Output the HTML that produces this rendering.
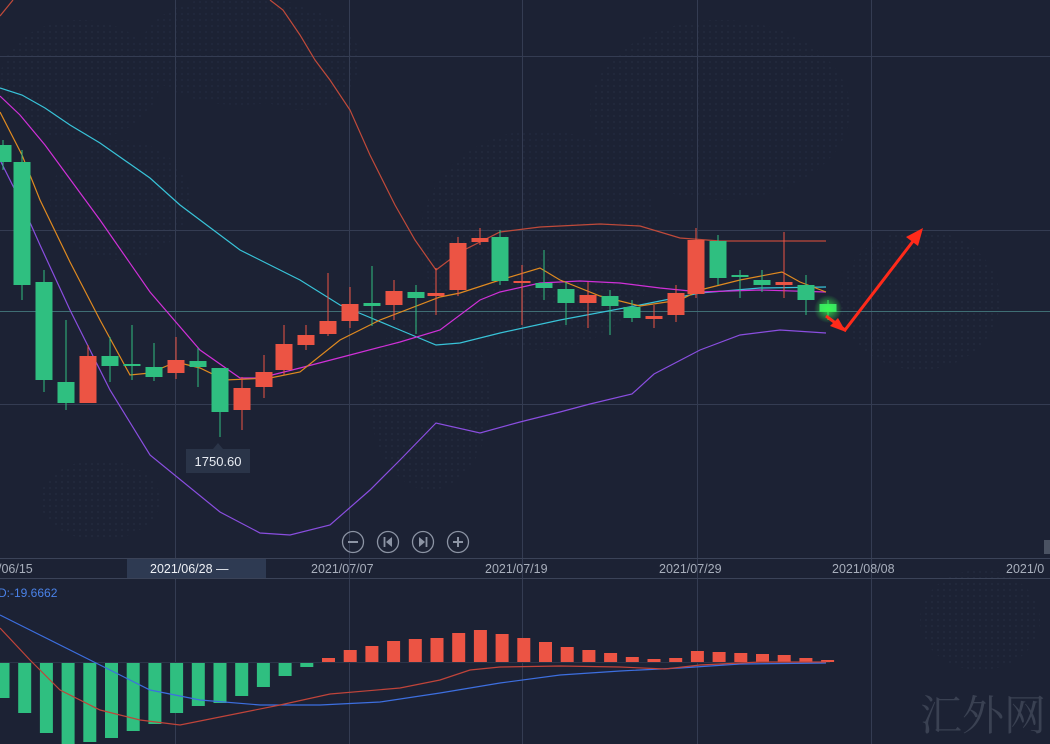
<!DOCTYPE html>
<html><head><meta charset="utf-8"><style>
html,body{margin:0;padding:0;background:#1c2234;}
body{width:1050px;height:744px;overflow:hidden;position:relative;font-family:"Liberation Sans",sans-serif;}
svg{position:absolute;left:0;top:0;}
</style></head><body>
<svg width="1050" height="744" viewBox="0 0 1050 744">
<defs>
<pattern id="dots" width="6" height="6" patternUnits="userSpaceOnUse"><rect x="1" y="1" width="2" height="2" fill="#232a3e"/></pattern>
<radialGradient id="glow"><stop offset="0" stop-color="#3cff50" stop-opacity="0.8"/><stop offset="1" stop-color="#3cff50" stop-opacity="0"/></radialGradient>
</defs>
<rect width="1050" height="744" fill="#1c2234"/>
<g fill="url(#dots)" opacity="0.7">
<ellipse cx="80" cy="80" rx="80" ry="60"/><ellipse cx="240" cy="50" rx="100" ry="55"/>
<ellipse cx="120" cy="200" rx="70" ry="60"/><ellipse cx="300" cy="60" rx="60" ry="50"/>
<ellipse cx="430" cy="400" rx="60" ry="90"/><ellipse cx="540" cy="240" rx="120" ry="110"/>
<ellipse cx="720" cy="110" rx="130" ry="90"/><ellipse cx="920" cy="300" rx="80" ry="70"/>
<ellipse cx="980" cy="620" rx="60" ry="50"/><ellipse cx="100" cy="500" rx="60" ry="40"/>
</g>
<g stroke="#343c52" stroke-width="1">
<line x1="0" y1="56.5" x2="1050" y2="56.5"/><line x1="0" y1="230.5" x2="1050" y2="230.5"/>
<line x1="0" y1="404.5" x2="1050" y2="404.5"/>
<line x1="175.5" y1="0" x2="175.5" y2="744"/><line x1="349.5" y1="0" x2="349.5" y2="744"/>
<line x1="522.5" y1="0" x2="522.5" y2="744"/><line x1="697.5" y1="0" x2="697.5" y2="744"/>
<line x1="871.5" y1="0" x2="871.5" y2="744"/>
</g>
<line x1="0" y1="311.5" x2="1050" y2="311.5" stroke="#3f6e74" stroke-width="1"/>
<line x1="0" y1="558.5" x2="1050" y2="558.5" stroke="#3b4358"/>
<line x1="0" y1="578.5" x2="1050" y2="578.5" stroke="#3b4358"/>
<polyline fill="none" stroke="#c04a3a" stroke-width="1.2" points="0,16 13,0"/>
<polyline fill="none" stroke="#c04a3a" stroke-width="1.2" points="270,0 283,10 300,35 315,60 330,80 350,110 370,155 395,205 415,240 436,270 460,252 500,232 540,227 600,224 640,226 680,238 720,241 826,241"/>
<polyline fill="none" stroke="#8a4ee0" stroke-width="1.2" points="0,160 20,200 40,245 70,310 110,390 150,455 220,512 260,533 290,535 330,525 370,490 400,460 436,423 480,433 520,422 560,412 590,404 632,394 654,374 700,350 740,335 780,330 826,333"/>
<polyline fill="none" stroke="#38c3d8" stroke-width="1.2" points="0,88 22,95 45,108 70,125 100,143 150,178 180,205 240,250 300,280 340,305 400,330 436,345 460,343 500,333 560,320 640,305 700,293 760,288 826,287"/>
<polyline fill="none" stroke="#d030d8" stroke-width="1.2" points="0,96 20,115 45,145 100,220 150,292 200,350 240,378 260,378 300,368 350,355 400,342 440,330 480,300 500,292 540,283 580,281 620,283 660,288 700,292 760,290 826,292"/>
<polyline fill="none" stroke="#e08a20" stroke-width="1.2" points="0,112 22,155 40,200 70,262 100,320 130,375 150,373 176,362 200,368 225,380 270,378 300,372 340,340 380,320 440,297 460,293 500,280 540,268 560,280 600,296 640,306 680,300 700,290 740,280 782,272 800,282 826,292"/>
<g id="candles"></g>
<circle cx="828" cy="309" r="14" fill="url(#glow)"/>
<g fill="#ff2a1a" stroke="#ff2a1a">
<polyline fill="none" stroke-width="3" points="826,316 845,330 917,236"/>
<polygon stroke="none" points="923,228 918,246 906,237"/>
<polygon stroke="none" points="846,332 830,326 838,318"/>
</g>
<line x1="0" y1="662.5" x2="830" y2="662.5" stroke="#2c3448"/>
<g id="macd"></g>
<polyline fill="none" stroke="#3d6fe0" stroke-width="1.2" points="0,615 40,635 100,665 150,690 200,700 260,705 320,705 380,702 440,693 500,683 560,675 620,671 680,668 740,664 826,663"/>
<polyline fill="none" stroke="#c0443a" stroke-width="1.2" points="0,628 30,660 60,690 100,710 140,720 180,725 240,713 280,705 330,694 400,688 440,680 470,670 500,667 560,666 620,667 665,669 700,665 760,662 826,662"/>
<rect x="186" y="449" width="64" height="24" fill="#2a3448"/>
<polygon points="213,449 223,449 218,443" fill="#2a3448"/>
<text x="218" y="466" fill="#e8ecf2" font-size="13" text-anchor="middle">1750.60</text>
<g fill="none" stroke="#8c94a4" stroke-width="1.3">
<circle cx="353" cy="542" r="10.5"/><circle cx="388" cy="542" r="10.5"/><circle cx="423" cy="542" r="10.5"/><circle cx="458" cy="542" r="10.5"/>
<line x1="348" y1="542" x2="358" y2="542" stroke-width="2"/>
<line x1="453" y1="542" x2="463" y2="542" stroke-width="2"/><line x1="458" y1="537" x2="458" y2="547" stroke-width="2"/>
<line x1="384.5" y1="537" x2="384.5" y2="547" stroke-width="1.8"/>
<line x1="426.5" y1="537" x2="426.5" y2="547" stroke-width="1.8"/>
</g>
<polygon points="392,537 392,547 386,542" fill="#8c94a4"/>
<polygon points="419,537 419,547 425,542" fill="#8c94a4"/>
<rect x="127" y="559" width="139" height="19" fill="#2e3a52"/>
<g font-size="12.5" fill="#a8afbc">
<text x="-2" y="573">/06/15</text>
<text x="150" y="573" fill="#eef1f6">2021/06/28 —</text>
<text x="311" y="573">2021/07/07</text>
<text x="485" y="573">2021/07/19</text>
<text x="659" y="573">2021/07/29</text>
<text x="832" y="573">2021/08/08</text>
<text x="1006" y="573">2021/0</text>
</g>
<rect x="1044" y="540" width="6" height="14" fill="#4a5262"/>
<text x="-2" y="597" font-size="12" fill="#4a82e8">D:-19.6662</text>
<text x="920" y="730" font-size="42" fill="#3a4152" font-family="'Noto Serif CJK SC',serif">汇外网</text>
</svg>
<script>
var G="#2fbf80",R="#ec5444";
var c=[[3,'g',145,162,140,170],[22,'g',162,285,150,300],[44,'g',282,380,270,392],[66,'g',382,403,320,410],[88,'r',356,403,345,403],[110,'g',356,366,337,382],[132,'g',364,366,325,380],[154,'g',367,377,343,381],[176,'r',360,373,337,379],[198,'g',361,367,348,387],[220,'g',368,412,368,437],[242,'r',388,410,377,430],[264,'r',372,387,355,398],[284,'r',344,370,325,375],[306,'r',335,345,325,350],[328,'r',321,334,273,336],[350,'r',304,321,287,328],[372,'g',303,306,266,326],[394,'r',291,305,280,320],[416,'g',292,298,285,334],[436,'r',293,296,268,315],[458,'r',243,290,237,296],[480,'r',238,242,228,245],[500,'g',237,281,230,285],[522,'r',281,283,265,325],[544,'g',283,288,250,300],[566,'g',289,303,282,325],[588,'r',295,303,282,328],[610,'g',296,306,290,335],[632,'g',307,318,300,322],[654,'r',316,319,305,328],[676,'r',293,315,285,322],[696,'r',240,294,228,298],[718,'g',241,278,235,285],[740,'g',275,277,270,298],[762,'g',280,285,270,292],[784,'r',282,285,232,298],[806,'g',285,300,275,315],[828,'g',304,312,300,320]];
var s='';c.forEach(function(k){var col=k[1]=='g'?(k[0]==828?'#36d86a':G):R;s+='<line x1="'+k[0]+'" y1="'+k[4]+'" x2="'+k[0]+'" y2="'+k[5]+'" stroke="'+col+'" stroke-width="1"/><rect x="'+(k[0]-8.5)+'" y="'+k[2]+'" width="17" height="'+Math.max(2,k[3]-k[2])+'" fill="'+col+'"/>';});
document.getElementById('candles').innerHTML=s;
var m=[698,713,733,746,742,738,731,724,713,706,703,696,687,676,667,658,650,646,641,639,638,633,630,634,638,642,647,650,653,657,659,658,651,652,653,654,655,658,660];
var t='';m.forEach(function(y,i){var x=3+21.7*i;if(i<15)t+='<rect x="'+(x-6.5)+'" y="663" width="13" height="'+(y-663)+'" fill="'+G+'"/>';else t+='<rect x="'+(x-6.5)+'" y="'+y+'" width="13" height="'+(662-y)+'" fill="'+R+'"/>';});
document.getElementById('macd').innerHTML=t;
</script>
</body></html>
